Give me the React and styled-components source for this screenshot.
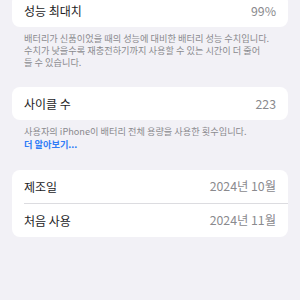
import React from 'react';
import styled, { createGlobalStyle } from 'styled-components';

const GlobalStyle = createGlobalStyle`
  html, body {
    margin: 0;
    padding: 0;
    background: #f2f1f6;
  }
  body {
    font-family: 'Noto Sans CJK KR', 'Noto Sans', sans-serif;
    -webkit-font-smoothing: antialiased;
  }
`;

const Page = styled.div`
  width: 300px;
  height: 300px;
  overflow: hidden;
  background: #f2f1f6;
`;

const Content = styled.div`
  margin-top: -6px;
  padding: 0 12px;
  display: flex;
  flex-direction: column;
`;

const Section = styled.section`
  margin-bottom: ${(p) => p.gap || 19}px;
`;

const Card = styled.div`
  background: #ffffff;
  border-radius: 8px;
  overflow: hidden;
`;

const Row = styled.div`
  height: 33px;
  display: flex;
  align-items: center;
  justify-content: space-between;
  padding: 0 12px;

  & + & {
    border-top: 0.8px solid #dcdce0;
    margin-left: 12px;
    padding-left: 0;
  }
`;

const Label = styled.span`
  font-size: 12px;
  color: #1c1c1e;
`;

const Value = styled.span`
  font-size: 12.3px;
  color: #8a8a8e;
`;

const Footer = styled.div`
  padding: 6px 12px 0;
  font-size: 9.2px;
  line-height: 11.8px;
  color: #8a8a8e;
  white-space: nowrap;
`;

const Link = styled.div`
  color: #2f7cf6;
  font-weight: 600;
  margin-top: 1px;
`;

export default function App() {
  return (
    <Page>
      <GlobalStyle />
      <Content>
        <Section>
          <Card>
            <Row>
              <Label>성능 최대치</Label>
              <Value>99%</Value>
            </Row>
          </Card>
          <Footer>
            배터리가 신품이었을 때의 성능에 대비한 배터리 성능 수치입니다.
            <br />
            수치가 낮을수록 재충전하기까지 사용할 수 있는 시간이 더 줄어
            <br />
            들 수 있습니다.
          </Footer>
        </Section>
        <Section>
          <Card>
            <Row>
              <Label>사이클 수</Label>
              <Value>223</Value>
            </Row>
          </Card>
          <Footer>
            사용자의 iPhone이 배터리 전체 용량을 사용한 횟수입니다.
            <Link>더 알아보기...</Link>
          </Footer>
        </Section>
        <Section>
          <Card>
            <Row>
              <Label>제조일</Label>
              <Value>2024년 10월</Value>
            </Row>
            <Row>
              <Label>처음 사용</Label>
              <Value>2024년 11월</Value>
            </Row>
          </Card>
        </Section>
      </Content>
    </Page>
  );
}
